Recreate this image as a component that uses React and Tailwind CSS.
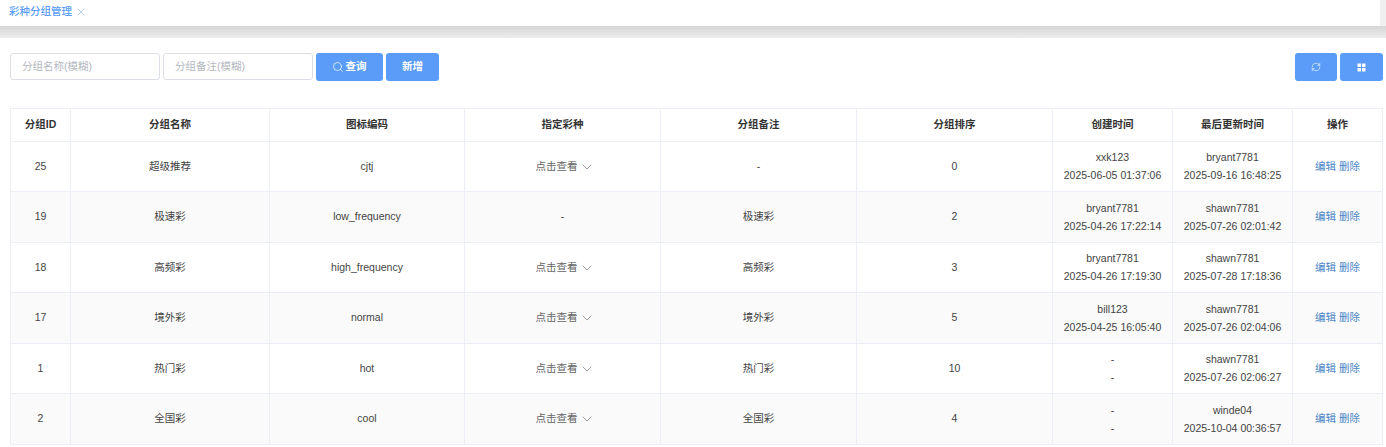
import React from "react";
import { Search, X, ChevronDown, RefreshCw } from "lucide-react";

const widths = [60, 199, 195, 196, 196, 196, 120, 120, 90];
const headers = ["分组ID", "分组名称", "图标编码", "指定彩种", "分组备注", "分组排序", "创建时间", "最后更新时间", "操作"];
const rows = [
  { h: "h-[50px]", c: ["25", "超级推荐", "cjtj", true, "-", "0", ["xxk123", "2025-06-05 01:37:06"], ["bryant7781", "2025-09-16 16:48:25"]] },
  { h: "h-[51px]", c: ["19", "极速彩", "low_frequency", false, "极速彩", "2", ["bryant7781", "2025-04-26 17:22:14"], ["shawn7781", "2025-07-26 02:01:42"]] },
  { h: "h-[50px]", c: ["18", "高频彩", "high_frequency", true, "高频彩", "3", ["bryant7781", "2025-04-26 17:19:30"], ["shawn7781", "2025-07-28 17:18:36"]] },
  { h: "h-[51px]", c: ["17", "境外彩", "normal", true, "境外彩", "5", ["bill123", "2025-04-25 16:05:40"], ["shawn7781", "2025-07-26 02:04:06"]] },
  { h: "h-[50px]", c: ["1", "热门彩", "hot", true, "热门彩", "10", ["-", "-"], ["shawn7781", "2025-07-26 02:06:27"]] },
  { h: "h-[51px]", c: ["2", "全国彩", "cool", true, "全国彩", "4", ["-", "-"], ["winde04", "2025-10-04 00:36:57"]] },
];

const cell = "border border-[#ebeef5] text-center align-middle p-0";

function Stack({ lines }) {
  return (
    <div className="flex flex-col items-center gap-[5px] leading-[13px]">
      <span>{lines[0]}</span>
      <span>{lines[1]}</span>
    </div>
  );
}

function Expand() {
  return (
    <span className="inline-flex items-center justify-center gap-[1px] text-[#666]">
      点击查看
      <ChevronDown size={16} strokeWidth={1.1} className="-mr-[5px] text-[#777]" />
    </span>
  );
}

export default function App() {
  return (
    <div className="w-[1386px] h-[447px] overflow-hidden bg-white text-[10.5px] text-[#444] font-['Liberation_Sans','Noto_Sans_CJK_SC',sans-serif]">
      <div className="h-[26px] bg-white flex">
        <div className="flex-1 flex items-center pl-[9px] pb-[3px] gap-[3px]">
          <span className="text-[#5b9ef9] font-medium">彩种分组管理</span>
          <X size={12} strokeWidth={1.2} className="text-[#8ab4e8]" />
        </div>
        <div className="w-[6px] bg-[#f0f0f0]" />
      </div>
      <div className="h-[12px] bg-gradient-to-b from-[#d6d6d6] to-[#ececec]" />

      <div className="flex items-start justify-between pl-[10px] pr-[3px] pt-[15px] h-[70px]">
        <div className="flex gap-[3px]">
          <div className="w-[150px] h-[27px] border border-[#dcdfe6] rounded-[3px] flex items-center pl-[11px] text-[#b4b8c0]">分组名称(模糊)</div>
          <div className="w-[150px] h-[27px] border border-[#dcdfe6] rounded-[3px] flex items-center pl-[11px] text-[#b4b8c0]">分组备注(模糊)</div>
          <button className="w-[67px] h-[28px] bg-[#5a9cf8] rounded-[3px] text-white font-bold flex items-center justify-center gap-[2px] pr-[1px]">
            <Search size={12} strokeWidth={1.4} />
            查询
          </button>
          <button className="w-[53px] h-[28px] bg-[#5a9cf8] rounded-[3px] text-white font-bold flex items-center justify-center">新增</button>
        </div>
        <div className="flex gap-[3px]">
          <button className="w-[42px] h-[28px] bg-[#5a9cf8] rounded-[3px] text-white flex items-center justify-center">
            <RefreshCw size={10} strokeWidth={1.4} />
          </button>
          <button className="w-[43px] h-[28px] bg-[#5a9cf8] rounded-[3px] text-white flex items-center justify-center">
            <svg width="9" height="9" viewBox="0 0 9 9" fill="currentColor">
              <rect x="0.5" y="0.5" width="3.5" height="3.5" />
              <rect x="5" y="0.5" width="3.5" height="3.5" />
              <rect x="0.5" y="5" width="3.5" height="3.5" />
              <rect x="5" y="5" width="3.5" height="3.5" />
            </svg>
          </button>
        </div>
      </div>

      <div className="pl-[10px]">
        <table className="table-fixed border-collapse w-[1373px]">
          <colgroup>
            {widths.map((w, i) => (
              <col key={i} style={{ width: w }} />
            ))}
          </colgroup>
          <thead>
            <tr className="h-[33px]">
              {headers.map((h) => (
                <th key={h} className={`${cell} font-bold text-[#333]`}>{h}</th>
              ))}
            </tr>
          </thead>
          <tbody>
            {rows.map((r, i) => (
              <tr key={i} className={`${r.h} ${i % 2 ? "bg-[#fafafa]" : "bg-white"}`}>
                {r.c.map((v, j) => (
                  <td key={j} className={cell}>
                    {v === true ? <Expand /> : v === false ? "-" : Array.isArray(v) ? <Stack lines={v} /> : v}
                  </td>
                ))}
                <td className={`${cell} text-[#4c86c6]`}>编辑 删除</td>
              </tr>
            ))}
          </tbody>
        </table>
      </div>
    </div>
  );
}
